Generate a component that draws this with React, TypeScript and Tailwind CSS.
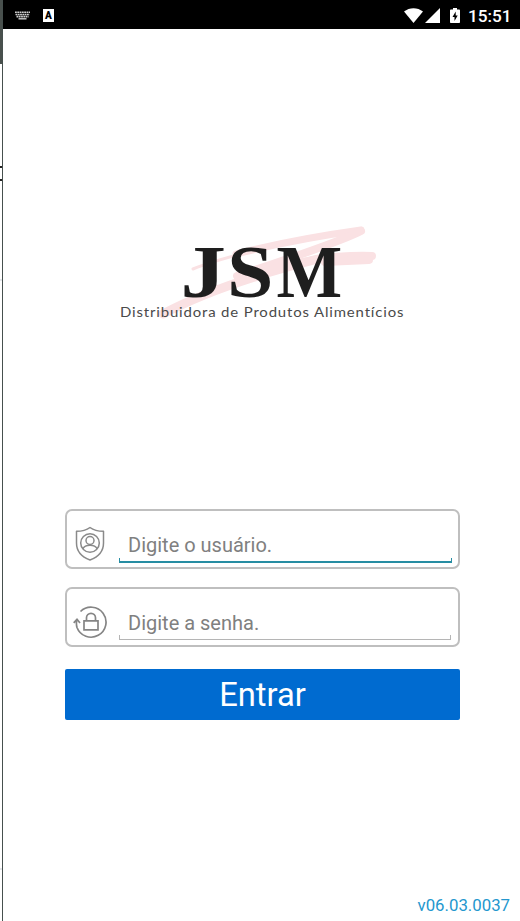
import React from "react";

function StatusBar() {
  return (
    <div className="h-[29px] w-full bg-black flex flex-row items-center justify-between pl-3 pr-2 pt-[2px]">
      <div className="flex flex-row items-center">
        <svg width="15" height="9" viewBox="0 0 15 9" fill="none" stroke="#d0d0d0">
          <path d="M0 1.2h15M0.5 3.5h14M1.5 5.6h12" strokeWidth="1.6" strokeDasharray="1.8 0.5" />
          <path d="M3.5 7.8h8" strokeWidth="1.4" />
        </svg>
        <div className="ml-[13px] h-[13px] w-[11px] bg-white text-black font-['Roboto',sans-serif] font-black text-[10px] leading-[13px] text-center">
          A
        </div>
      </div>
      <div className="flex flex-row items-center">
        <svg width="19" height="15" viewBox="0 0 19 15" fill="#fff">
          <path d="M0 3.6C5.5-1 13.500-1 19 3.600L9.500 15z" />
        </svg>
        <svg className="ml-[2px]" width="15" height="15" viewBox="0 0 15 15" fill="#fff">
          <path d="M15 0v15H0z" />
        </svg>
        <svg className="ml-[10px]" width="10" height="15" viewBox="0 0 10 15">
          <path d="M3 0h4v1.600h2.200q.8 0 .8.8V14.200q0 .8-.8.8H.8q-.8 0-.8-.8V2.400q0-.8.8-.8H3z" fill="#fff" />
          <path d="M5.700 3.500L2.500 9h2v4L7.700 7.500H5.700z" fill="#000" />
        </svg>
        <span className="ml-[8px] w-[44px] pt-px text-white font-medium text-[17.200px] leading-5">15:51</span>
      </div>
    </div>
  );
}

function Logo() {
  return (
    <svg width="290" height="102" viewBox="118 222 290 102">
      <g fill="none" stroke="#fae1e3" strokeLinecap="round" strokeLinejoin="round">
        <path d="M193 269C215 260 240 254 268 247" strokeWidth="3" />
        <path d="M236 254C275 244 325 235 361 230" strokeWidth="7" />
        <path d="M361 231C340 242 285 260 237 276" strokeWidth="8" />
        <path d="M163 314C210 289 270 271 322 258" strokeWidth="9" />
        <path d="M260 273C300 260 340 255 372 256" strokeWidth="8" />
        <path d="M325 262L369 260" strokeWidth="8" />
      </g>
      <g fill="#1e1e1e" fontFamily="Liberation Serif, serif" fontWeight="700" fontSize="74">
        <text transform="translate(180.500 297) scale(1.230 1)">J</text>
        <text transform="translate(227 297) scale(1.130 1)">S</text>
        <text transform="translate(276.500 297) scale(.94 1)">M</text>
      </g>
      <text
        transform="translate(120 317) scale(1.150 1)"
        textLength="246.500"
        fill="#4a4a4a"
        fontFamily="Lato, sans-serif"
        fontSize="13"
        style={{ fontVariantLigatures: "none" }}
      >
        Distribuidora de Produtos Alimentícios
      </text>
    </svg>
  );
}

function UserIcon() {
  return (
    <svg width="30" height="36" viewBox="0 0 30 36" fill="none" stroke="#8a8a8a" strokeWidth="1.500" strokeLinejoin="round">
      <path d="M15 1.500C11 4.500 6 5.300 1.500 5.300V17C1.500 25 7 31 15 34C23 31 28.500 25 28.500 17V5.300C24 5.300 19 4.500 15 1.500z" />
      <circle cx="15" cy="17" r="9.300" />
      <circle cx="15" cy="14.500" r="4" />
      <path d="M7.800 23C9 20.500 11.500 19.300 15 19.300S21 20.500 22.200 23" />
    </svg>
  );
}

function PasswordIcon() {
  return (
    <svg width="34" height="34" viewBox="0 0 34 34" fill="none" stroke="#858585" strokeWidth="1.700">
      <path d="M7.500 6.500A15 15 0 1 1 4 22.500C3.300 20 3.300 17 3.800 14.500M.7 17.800L4 14.300L7 18" />
      <path d="M11 15.800h14v9H11zM13.500 15.800v-3a4.500 4.500 0 0 1 9 0v3" />
    </svg>
  );
}

interface FieldProps {
  icon: React.ReactNode;
  label: string;
  type: string;
  lineClass: string;
}

function Field({ icon, label, type, lineClass }: FieldProps) {
  return (
    <div className="h-[60px] w-full flex flex-row border-2 border-[#bfbfbf] rounded-[7px] pl-[6px] pr-[6px]">
      <div className="w-[34px] mr-[12px] pt-[10px] flex items-center justify-center">{icon}</div>
      <div className="flex-1 flex flex-col pt-5">
        <input
          type={type}
          placeholder={label}
          className="w-full h-[28px] pl-[9px] text-[20px] leading-7 placeholder:text-[#808080] placeholder:opacity-100 outline-none"
        />
        <div className={lineClass} />
      </div>
    </div>
  );
}

export default function App() {
  return (
    <div className="h-[921px] w-[520px] flex flex-row bg-white overflow-hidden font-['Roboto',sans-serif]">
      <div className="w-[2px] flex flex-col">
        <div className="h-[64px] bg-[#49504d]" />
        <div className="mt-[102px] h-[2px] bg-[#222]" />
        <div className="mt-[11px] h-[2px] bg-[#222]" />
        <div className="mt-[98px] h-[2px] bg-gray-200" />
        <div className="mt-[587px] h-[2px] bg-gray-200" />
      </div>
      <div className="w-px bg-[#46504e]" />
      <div className="flex-1 flex flex-col">
        <StatusBar />
        <div className="pl-[115px] pt-[193px]">
          <Logo />
        </div>
        <div className="mt-[185px] ml-[62px] w-[395px] flex flex-col">
          <Field
            icon={<UserIcon />}
            label="Digite o usuário."
            type="text"
            lineClass="h-[5px] -mt-px w-[333px] border-x border-b-2 border-[#278da3]"
          />
          <div className="h-[18px]" />
          <Field
            icon={<PasswordIcon />}
            label="Digite a senha."
            type="password"
            lineClass="h-[5px] -mt-[2px] w-[332px] border-x border-b border-[#b5b5b5]"
          />
          <button className="mt-[22px] h-[51px] w-full rounded-[2px] bg-[#006bd0] text-white text-[32.700px] leading-[49px] pt-[2px]">
            Entrar
          </button>
        </div>
        <div className="mt-auto pr-[10px] pb-[6px] text-right text-[16.800px] leading-5 text-[#2497ce]">
          v06.03.0037
        </div>
      </div>
    </div>
  );
}
